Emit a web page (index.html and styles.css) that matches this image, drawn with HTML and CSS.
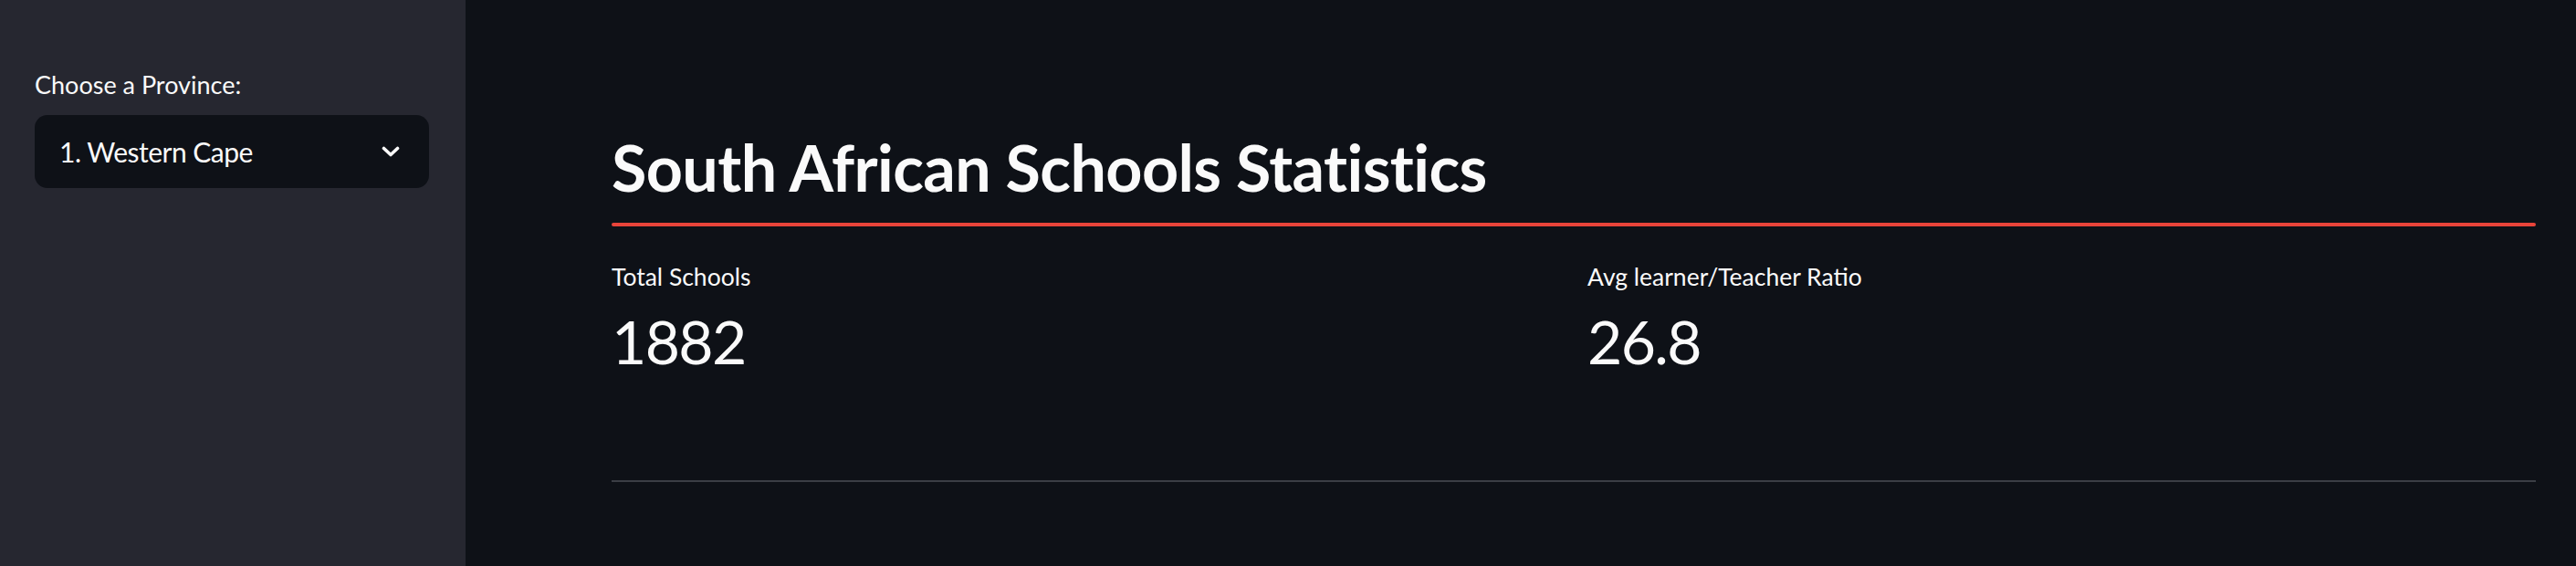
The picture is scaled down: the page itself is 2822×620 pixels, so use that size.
FILE: index.html
```html
<!DOCTYPE html>
<html lang="en">
<head>
<meta charset="utf-8">
<title>South African Schools Statistics</title>
<link rel="stylesheet" href="styles.css">
</head>
<body>
<aside class="sidebar">
  <label class="field-label">Choose a Province:</label>
  <div class="select">
    <span class="select-value">1. Western Cape</span>
    <svg class="chevron" width="20" height="12" viewBox="0 0 20 12" aria-hidden="true">
      <polyline points="2.5,2.5 10,9.5 17.5,2.5" fill="none" stroke="#fafafa" stroke-width="3.6" stroke-linecap="round" stroke-linejoin="round"/>
    </svg>
  </div>
</aside>
<main class="main">
  <h1 class="title">South African Schools Statistics</h1>
  <div class="divider-red"></div>
  <section class="metrics">
    <div class="metric">
      <div class="metric-label">Total Schools</div>
      <div class="metric-value">1882</div>
    </div>
    <div class="metric">
      <div class="metric-label">Avg learner/Teacher Ratio</div>
      <div class="metric-value">26.8</div>
    </div>
  </section>
  <hr class="rule">
</main>
</body>
</html>
```

FILE: styles.css
```css
html, body {
  margin: 0;
  padding: 0;
  height: 620px;
  overflow: hidden;
}

body {
  display: flex;
  background: #0e1117;
  color: #fafafa;
  font-family: Lato, "Noto Sans", sans-serif;
}

.sidebar {
  width: 510px;
  flex: 0 0 510px;
  box-sizing: border-box;
  background: #262730;
  padding: 77px 40px 0 38px;
}

.field-label {
  display: block;
  font-size: 27px;
  line-height: 1.2;
  height: 32px;
  margin-bottom: 17px;
}

.select {
  height: 80px;
  box-sizing: border-box;
  background: #0e1117;
  border-radius: 14px;
  display: flex;
  align-items: center;
  justify-content: space-between;
  padding: 0 32px 0 27px;
}

.select-value {
  font-size: 30px;
  line-height: 1.2;
  letter-spacing: -0.5px;
}

.chevron {
  display: block;
}

.main {
  flex: 1;
  box-sizing: border-box;
  padding: 141px 44px 0 160px;
}

.title {
  margin: 0;
  font-size: 70px;
  line-height: 1.2;
  font-weight: 700;
  letter-spacing: -0.6px;
}

.divider-red {
  margin-top: 19px;
  height: 4px;
  border-radius: 2px;
  background: #e8443a;
}

.metrics {
  display: grid;
  grid-template-columns: 1fr 1fr;
  column-gap: 30px;
  margin-top: 40px;
}

.metric-label {
  font-size: 26.5px;
  line-height: 1.2;
}

.metric-value {
  margin-top: 14px;
  font-size: 66px;
  line-height: 1.2;
  letter-spacing: -1.6px;
}

.rule {
  margin: 113px 0 0;
  border: 0;
  height: 2px;
  background: #3b3e45;
}
```
